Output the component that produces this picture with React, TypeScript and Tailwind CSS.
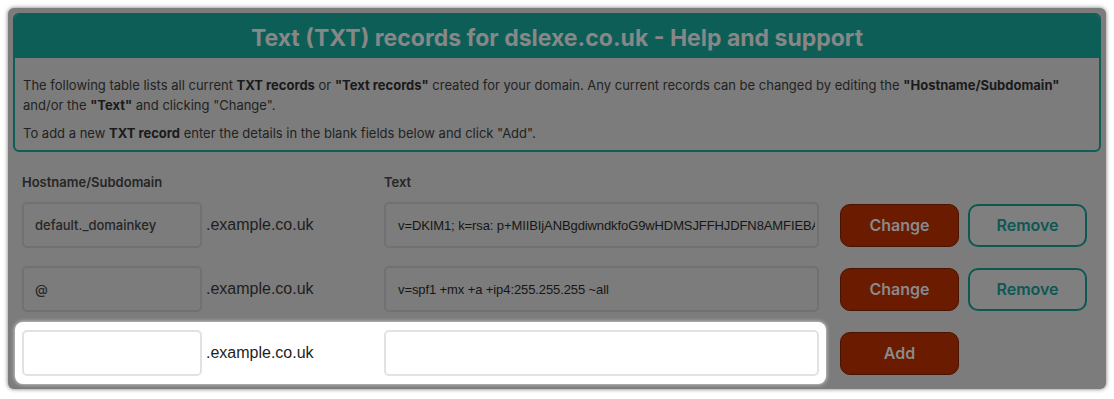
import React from 'react';

interface TxtRecord {
  host: string;
  text: string;
}

const records: TxtRecord[] = [
  { host: 'default._domainkey', text: 'v=DKIM1; k=rsa: p+MIIBIjANBgdiwndkfoG9wHDMSJFFHJDFN8AMFIEBAQUAA4GNADCBiQKBgQC' },
  { host: '@', text: 'v=spf1 +mx +a +ip4:255.255.255 ~all' },
];

const siteFont = "font-['Inter',sans-serif]";
const arial = "font-['Liberation_Sans',Arial,sans-serif]";

const RecordRow: React.FC<{ record?: TxtRecord }> = ({ record }) => {
  const isNew = !record;
  const inputBorder = isNew ? 'border-[#e2e2e2] bg-white' : 'border-[#717171] bg-[#7c7c7c]';

  return (
    <div className="flex items-center">
      {/* inputs (the blank row is the highlighted one) */}
      <div className={`flex items-center rounded-lg px-[7px] py-[8px] ${isNew ? 'bg-white shadow-[0_0_4px_rgba(255,255,255,0.8)]' : ''}`}>
        <input
          readOnly
          defaultValue={record?.host ?? ''}
          className={`h-[46px] w-[180px] rounded-[5px] border-2 px-[11px] text-[13px] font-medium text-[#262626] outline-none ${siteFont} ${inputBorder}`}
        />
        <span className={`ml-[4px] w-[178px] text-[16px] text-[#1e1e1e] ${arial}`}>.example.co.uk</span>
        <input
          readOnly
          defaultValue={record?.text ?? ''}
          className={`h-[46px] w-[435px] rounded-[5px] border-2 pl-[12px] pr-[2px] text-[13px] tracking-[-0.1px] text-[#161616] outline-none ${arial} ${inputBorder}`}
        />
      </div>

      {/* actions */}
      <div className={`ml-[14px] flex gap-[9px] ${siteFont}`}>
        <button className="h-[43px] w-[119px] rounded-[10px] border border-[#4a1200] bg-[#6b1b00] text-[16px] font-semibold text-[#8a8a8a]">
          {isNew ? 'Add' : 'Change'}
        </button>
        {!isNew && (
          <button className="h-[43px] w-[119px] rounded-[10px] border-2 border-[#0d5852] bg-[#7f7f7f] text-[16px] font-semibold text-[#0d5852]">
            Remove
          </button>
        )}
      </div>
    </div>
  );
};

export default function App() {
  return (
    <div className="min-h-screen bg-white p-2">
      <div className="rounded-md bg-[#7c7c7c] px-[5px] pb-[5px] pt-[5px] shadow-[0_0_4px_rgba(0,0,0,0.55)]">
        {/* Help box */}
        <div className={`overflow-hidden rounded-md border-2 border-[#0e5e58] ${siteFont}`}>
          <div className="flex h-[43px] items-center justify-center bg-[#0e5e58] pt-[3px]">
            <h2 className="text-[23px] font-bold text-[#878787]">
              Text (TXT) records for dslexe.co.uk - Help and support
            </h2>
          </div>
          <div className="px-[8px] pb-[7px] pt-[17px] text-[13px] leading-[20px] text-[#222222]">
            <p>
              The following table lists all current <b className="text-[#1a1a1a]">TXT records</b> or{' '}
              <b className="text-[#1a1a1a]">"Text records"</b> created for your domain. Any current records can be changed by
              editing the <b className="text-[#1a1a1a]">"Hostname/Subdomain"</b>
              <br />
              and/or the <b className="text-[#1a1a1a]">"Text"</b> and clicking "Change".
            </p>
            <p className="mt-[8px]">
              To add a new <b className="text-[#1a1a1a]">TXT record</b> enter the details in the blank fields below and click "Add".
            </p>
          </div>
        </div>

        {/* Records table */}
        <div className="mt-[23px] pl-[2px]">
          <div className={`flex h-[16px] items-center pl-[7px] text-[13px] font-semibold text-[#262626] ${siteFont}`}>
            <span className="w-[362px]">Hostname/Subdomain</span>
            <span>Text</span>
          </div>
          <div className="mt-[3px] flex flex-col gap-[2px]">
            {records.map((r) => (
              <RecordRow key={r.host} record={r} />
            ))}
            <RecordRow />
          </div>
        </div>
      </div>
    </div>
  );
}
